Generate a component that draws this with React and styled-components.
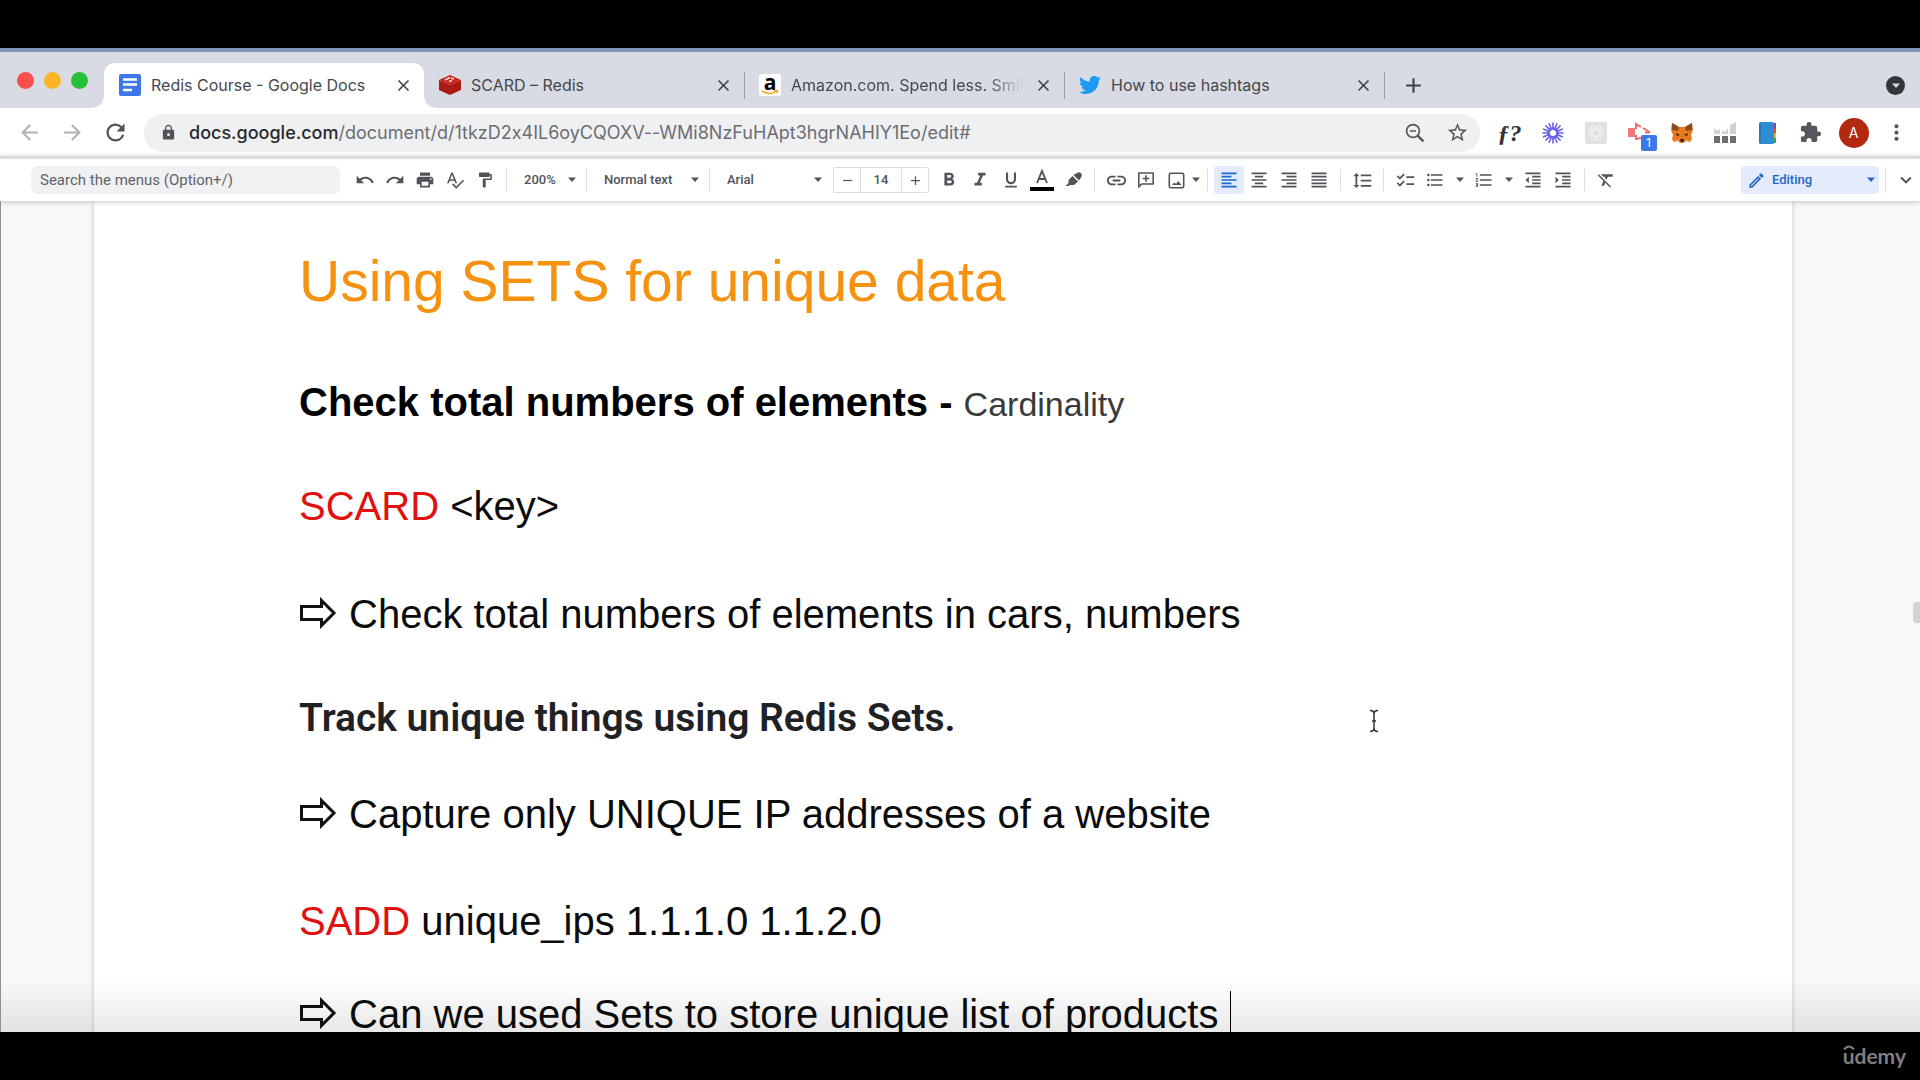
import React from "react";
import styled, { createGlobalStyle, css } from "styled-components";
import {
  MdUndo, MdRedo, MdPrint, MdSpellcheck, MdFormatPaint, MdFormatBold, MdFormatItalic,
  MdFormatUnderlined, MdLink, MdFormatAlignLeft, MdFormatAlignCenter,
  MdFormatAlignRight, MdFormatAlignJustify, MdFormatLineSpacing, MdChecklist,
  MdFormatListBulleted, MdFormatListNumbered, MdFormatIndentDecrease, MdFormatIndentIncrease,
  MdFormatClear, MdClose, MdAdd, MdRemove, MdLock, MdRefresh, MdStarBorder, MdExtension,
  MdMoreVert, MdArrowBack, MdArrowForward, MdExpandMore, MdOutlineEdit,
} from "react-icons/md";
import { FaTwitter } from "react-icons/fa";

const Global = createGlobalStyle`
  * { box-sizing: border-box; }
  body { margin: 0; background: #000; }
  button, input, select { font: inherit; color: inherit; border: 0; padding: 0; margin: 0; background: none; outline: 0; }
  button { cursor: pointer; }
  svg { display: block; flex: none; }
`;

const Screen = styled.div`
  height: 100vh;
  display: flex;
  flex-direction: column;
  padding-top: 48px;
  background: #000;
  font-family: Inter, "Liberation Sans", sans-serif;
`;

const Browser = styled.div`
  flex: 1;
  min-height: 0;
  display: flex;
  flex-direction: column;
  background: #fff;
  border-top: 4px solid #7f97b5;
`;

const TabStrip = styled.div`
  height: 56px;
  display: flex;
  align-items: flex-end;
  background: #d8dbe3;
`;

const Lights = styled.div`
  display: flex;
  gap: 10px;
  padding: 0 16px 19px 17px;
`;

const Light = styled.button`
  width: 17px;
  height: 17px;
  border-radius: 50%;
  background: ${(p) => p.$color};
`;

const Tab = styled.div`
  position: relative;
  width: 320px;
  height: 45px;
  padding: 0 11px 1px 15px;
  display: flex;
  align-items: center;
  gap: 10px;
  color: #45484d;
  font-size: 16px;
  line-height: 20px;
  ${(p) => p.$active && css`
    background: #fff;
    border-radius: 11px 11px 0 0;
    &::before, &::after {
      content: "";
      position: absolute;
      bottom: 0;
      width: 11px;
      height: 11px;
    }
    &::before { right: 100%; background: radial-gradient(circle at 0 0, transparent 10px, #fff 11px); }
    &::after { left: 100%; background: radial-gradient(circle at 100% 0, transparent 10px, #fff 11px); }
  `}
`;

const TabTitle = styled.span`
  flex: 1;
  min-width: 0;
  overflow: hidden;
  white-space: nowrap;
  ${(p) => p.$fade && css`
    mask-image: linear-gradient(to right, #000 84%, transparent 100%);
  `}
`;

const PlainButton = styled.button`
  display: flex;
  align-items: center;
  justify-content: center;
  color: ${(p) => p.$color || "#3c4043"};
`;

const TabLine = styled.span`
  width: 1px;
  height: 27px;
  margin: 0 -1px 9px 0;
  background: #9a9da5;
`;

const NewTab = styled(PlainButton)`
  width: 28px;
  height: 45px;
  padding-bottom: 1px;
  margin-left: 15px;
`;

const Spacer = styled.span`flex: 1;`;

const TabSearch = styled(PlainButton)`
  width: 19px;
  height: 19px;
  border-radius: 50%;
  background: #33373b;
  margin: 0 15px 13px 0;
`;

const AddressRow = styled.div`
  height: 48px;
  display: flex;
  align-items: center;
  padding: 1px 2px 0 8px;
  background: #fff;
`;

const NavButton = styled(PlainButton)`
  width: 43px;
  height: 40px;
`;

const UrlPill = styled.div`
  flex: 1;
  height: 38px;
  margin: 0 8px 0 7px;
  padding: 0 7px 0 16px;
  display: flex;
  align-items: center;
  gap: 12px;
  border-radius: 19px;
  background: #eff0f2;
  color: #505358;
`;

const Url = styled.a`
  flex: 1;
  font-size: 18px;
  line-height: 24px;
  color: #6b6e72;
  text-decoration: none;
  white-space: nowrap;
  font-feature-settings: "calt" 0;
  b { font-weight: 500; color: #26292d; }
`;

const PillButton = styled(PlainButton)`
  width: 31px;
  color: #54575b;
`;

const Extension = styled(PlainButton)`
  width: 43px;
  height: 40px;
`;

const FnText = styled.span`
  font: italic 700 24px/26px "Liberation Serif", serif;
  color: #303236;
`;

const Avatar = styled.span`
  width: 30px;
  height: 30px;
  border-radius: 50%;
  background: #b3290f;
  color: #fff;
  font: 400 14px/30px Inter, sans-serif;
  text-align: center;
`;

const BadgeWrap = styled.span`
  position: relative;
`;

const Badge = styled.span`
  position: absolute;
  left: 13px;
  top: 13px;
  width: 16px;
  height: 16px;
  border-radius: 2px;
  background: #3b78e7;
  color: #fff;
  font: 400 12px/16px Inter, sans-serif;
  text-align: center;
`;

const Toolbar = styled.div`
  position: relative;
  z-index: 1;
  height: 45px;
  display: flex;
  align-items: center;
  padding-left: 31px;
  border-top: 3px solid #dcdddf;
  background: #fff;
  box-shadow: 0 1px 5px rgba(60, 64, 67, 0.3);
  color: #50545a;
  font: 500 13px/20px Roboto, sans-serif;
`;

const MenuSearch = styled.input`
  width: 309px;
  height: 28px;
  padding: 0 9px;
  margin-right: 10px;
  border-radius: 7px;
  background: #f0f1f3;
  font: 400 15px/20px Roboto, sans-serif;
  &::placeholder { color: #5f6368; opacity: 1; }
`;

const Group = styled.div`
  display: flex;
  gap: ${(p) => p.$gap || 0}px;
`;

const Tool = styled.button`
  width: ${(p) => p.$width || 30}px;
  height: 28px;
  display: flex;
  align-items: center;
  justify-content: center;
  border-radius: 3px;
  ${(p) => p.$active && css`
    background: #e3ebfc;
    color: #1a67d2;
  `}
`;

const Line = styled.span`
  width: 1px;
  height: 22px;
  margin: 0 6px;
  background: #dadce0;
`;

const Pick = styled.label`
  position: relative;
  width: ${(p) => p.$width}px;
  height: 28px;
  display: flex;
  align-items: center;
  justify-content: flex-end;
  border-radius: 4px;
  ${(p) => p.$mode && css`
    background: #e3ebfc;
    color: #2565c4;
  `}
  select {
    position: absolute;
    inset: 0;
    width: 100%;
    padding-left: ${(p) => (p.$mode ? 31 : 11)}px;
    appearance: none;
  }
  > svg { margin-right: 3px; }
  > svg:first-child { margin: 0 auto 0 6px; }
`;

const Sizer = styled.div`
  width: 96px;
  height: 26px;
  margin: 0 5px 0 7px;
  display: flex;
  border: 1px solid #dadce0;
  border-radius: 2px;
  button { width: 26px; display: flex; align-items: center; justify-content: center; }
  input {
    flex: 1;
    min-width: 0;
    text-align: center;
    border: solid #dadce0;
    border-width: 0 1px;
  }
`;

const Workspace = styled.main`
  position: relative;
  flex: 1;
  min-height: 0;
  overflow: hidden;
  padding: 0 128px 0 93px;
  border-left: 1px solid #8e9093;
  background: #f7f8fa;
  &::after {
    content: "";
    position: absolute;
    inset: auto 0 0 0;
    height: 52px;
    background: linear-gradient(to bottom, rgba(0, 0, 0, 0), rgba(0, 0, 0, 0.09));
  }
`;

const Page = styled.article`
  min-height: 100%;
  padding: 48px 205px 0;
  background: #fff;
  box-shadow: 0 0 5px rgba(60, 64, 67, 0.25);
  color: #0b0b0b;
  font-family: "Liberation Sans", Arial, sans-serif;
  white-space: nowrap;
`;

const Title = styled.h1`
  margin: 0;
  font-size: 57px;
  line-height: 64px;
  font-weight: 400;
  color: #f6920f;
`;

const Para = styled.p`
  margin: ${(p) => p.$gap}px 0 0;
  font-size: 40px;
  line-height: 46px;
`;

const Heading = styled.h2`
  margin: ${(p) => p.$gap}px 0 0;
  font-size: 40px;
  line-height: 46px;
  font-weight: 700;
  color: #000;
  ${(p) => p.$roboto && css`
    font: 600 39px/46px Roboto, sans-serif;
    color: #202124;
  `}
`;

const Term = styled.span`
  font-weight: 400;
  font-size: 34px;
  line-height: 1;
  color: #3a3a3a;
`;

const Command = styled.span`color: #e0110f;`;

const ArrowSvg = styled.svg`
  display: inline-block;
  margin-right: 12px;
  vertical-align: -1px;
`;

const Arrow = () => (
  <ArrowSvg width="38" height="32" viewBox="0 0 38 32" role="img" aria-label="Arrow">
    <path d="M2.500 9.500H22.500V3.500L35 16 22.500 28.500V22.500H2.500z" fill="none" stroke="#111" strokeWidth="3" />
  </ArrowSvg>
);

const TextCaret = styled.span`
  display: inline-block;
  width: 1px;
  height: 46px;
  vertical-align: -9px;
  background: #000;
`;

const Thumb = styled.span`
  position: absolute;
  right: 0;
  top: 401px;
  width: 7px;
  height: 21px;
  border-radius: 4px 0 0 4px;
  background: #d2d3d7;
`;

const Pointer = styled.svg`
  position: absolute;
  left: 1366px;
  top: 508px;
`;

const Footer = styled.footer`
  height: 48px;
  display: flex;
  justify-content: flex-end;
  padding: 7px 14px 0 0;
`;

const Brand = styled.div`
  position: relative;
  color: #7f7f7f;
  font: 700 21px/34px Lato, sans-serif;
  svg { position: absolute; left: 0; top: 6px; }
`;

const Caret = () => (
  <svg width="10" height="6" viewBox="0 0 10 6"><path d="M1 0.5h8L5 5z" fill="currentColor" /></svg>
);

const DocsIcon = () => (
  <svg width="22" height="22" viewBox="0 0 22 22">
    <rect width="22" height="22" rx="2" fill="#3f76e8" />
    <path d="M4 5.5h14M4 10.5h14M4 16h9" stroke="#fff" strokeWidth="2.4" />
  </svg>
);

const RedisIcon = () => (
  <svg width="22" height="22" viewBox="0 0 22 22">
    <path d="M0 6v10l11 5 11-5V6l-11 5z" fill="#ab1a12" />
    <path d="M0 6l11-5 11 5-11 5z" fill="#c8251c" />
    <path d="M6 6l5-2.5M10 7.5l3-1M12 4l3 1" stroke="#fbdcd8" strokeWidth="1.6" />
  </svg>
);

const AmazonBox = styled.span`
  position: relative;
  width: 22px;
  height: 22px;
  border-radius: 3px;
  background: #fff;
  color: #000;
  font: 700 21px/16px "Open Sans", sans-serif;
  text-align: center;
  svg { position: absolute; left: 2px; bottom: 1px; }
`;

const AmazonIcon = () => (
  <AmazonBox>
    a
    <svg width="18" height="5" viewBox="0 0 18 5">
      <path d="M1 1q8 5 15 0M13 .7h3.4v2.6" fill="none" stroke="#f5a623" strokeWidth="1.5" />
    </svg>
  </AmazonBox>
);

const Burst = () => (
  <svg width="22" height="22" viewBox="-11 -11 22 22">
    {Array.from({ length: 16 }, (_, i) => (
      <path key={i} d="M0 -4V-10" stroke="#6a62e4" strokeWidth="1.6" strokeLinecap="round" transform={`rotate(${i * 22.5})`} />
    ))}
    <circle r="4.5" fill="none" stroke="#6a62e4" strokeWidth="2.4" />
  </svg>
);

const Atom = () => (
  <svg width="22" height="22" viewBox="0 0 22 22">
    <rect width="22" height="22" rx="2" fill="#e0e0e0" />
    <g fill="none" stroke="#f0f0f0" strokeWidth="1.2">
      <ellipse cx="11" cy="11" rx="8" ry="3.4" />
      <ellipse cx="11" cy="11" rx="8" ry="3.4" transform="rotate(60 11 11)" />
      <ellipse cx="11" cy="11" rx="8" ry="3.4" transform="rotate(120 11 11)" />
    </g>
  </svg>
);

const Player = () => (
  <svg width="22" height="22" viewBox="0 0 22 22">
    <path d="M0 6h7v9H0z" fill="#ef7777" />
    <path d="M8 7V2l5 3M15 6l7 4.500h-5M8 13v4l5-1" fill="none" stroke="#ee6b6b" strokeWidth="2" />
  </svg>
);

const Fox = () => (
  <svg width="22" height="22" viewBox="0 0 22 22">
    <path d="M1 1l7 4h6l7-4 1 7-2 5 1 4-2 3-4-1-2 2H9l-2-2-4 1-2-3 1-4-2-5z" fill="#e8791c" />
    <path d="M1 1l7 4-1 4-6-1zM21 1l-7 4 1 4 6-1z" fill="#8a4a1c" />
    <path d="M5 11l4 2-3 1zM17 11l-4 2 3 1z" fill="#3a2413" />
    <path d="M9 17h4l-1 3h-2z" fill="#2a2018" />
    <path d="M3 19l4-2 1 2zM19 19l-4-2-1 2z" fill="#d89a60" />
  </svg>
);

const Bars = () => (
  <svg width="22" height="22" viewBox="0 0 22 22">
    <path d="M0 6l3 3 3-2v5H0zM8 8l3 2 3-4v6H8zM16 3l6-3v12h-6z" fill="#d0d0d0" />
    <path d="M0 14h6v7H0zM8 14h6v7H8zM16 14h6v7h-6z" fill="#6d6d6d" />
  </svg>
);

const Book = () => (
  <svg width="18" height="22" viewBox="0 0 18 22">
    <rect width="15" height="22" rx="1.5" fill="#2f8bd2" />
    <path d="M1 2v18" stroke="#2577b8" strokeWidth="2" />
    <path d="M15 1h2v5h-2z" fill="#8d3fb0" /><path d="M15 6h2v5h-2z" fill="#e0463a" />
    <path d="M15 11h2v5h-2z" fill="#f0b429" /><path d="M15 16h2v5h-2z" fill="#3aa655" />
  </svg>
);

const ZoomOut = () => (
  <svg width="20" height="20" viewBox="0 0 20 20" fill="none" stroke="currentColor">
    <circle cx="8" cy="8" r="6.4" strokeWidth="1.7" />
    <path d="M12.6 12.6L18.4 18.4" strokeWidth="2.4" />
    <path d="M5 8h6" strokeWidth="1.5" />
  </svg>
);

const Highlighter = () => (
  <svg width="17" height="17" viewBox="0 0 17 17" fill="currentColor">
    <path d="M7.500 4l5.500 5.500-4 3.500H5l-1.500 1H.5L3.500 11V8z" />
    <path d="M8.500 3L12 1q2.500-1.500 4 .3t.3 3.700L14 8.500z" />
  </svg>
);

const CommentAdd = () => (
  <svg width="18" height="18" viewBox="0 0 18 18" fill="none" stroke="currentColor" strokeWidth="1.6">
    <path d="M1.800 16V2h14.400v11H4.600z" strokeLinejoin="round" /><path d="M9 4.300v6.400M5.800 7.500h6.400" />
  </svg>
);

const Picture = () => (
  <svg width="17" height="17" viewBox="0 0 17 17">
    <rect x="1.300" y="1.300" width="14.400" height="14.400" rx="1.500" fill="none" stroke="currentColor" strokeWidth="1.600" />
    <path d="M4 13l2.300-2.500 1.700 1.500 2.200-3L13.500 13z" fill="currentColor" />
  </svg>
);

const TextColor = () => (
  <svg width="24" height="24" viewBox="0 0 24 24">
    <path d="M7 15L12 3l5 12M8.600 11h6.800" fill="none" stroke="currentColor" strokeWidth="1.900" />
    <path d="M0 19h24v4H0z" fill="#000" />
  </svg>
);

const tabs = [
  { title: "Redis Course - Google Docs", icon: <DocsIcon />, active: true },
  { title: "SCARD – Redis", icon: <RedisIcon />, line: true },
  { title: "Amazon.com. Spend less. Smile more.", icon: <AmazonIcon />, line: true, fade: true },
  { title: "How to use hashtags", icon: <FaTwitter size={22} color="#1d9bf0" />, line: true },
];

const extensions = [
  ["Function lookup", <FnText key="f">ƒ?</FnText>],
  ["Loom", <Burst key="b" />],
  ["React tools", <Atom key="a" />],
  ["Recorder", <BadgeWrap key="r"><Player /><Badge>1</Badge></BadgeWrap>],
  ["MetaMask", <Fox key="m" />],
  ["Statistics", <Bars key="s" />],
  ["Notebook", <Book key="n" />],
  ["Extensions", <MdExtension key="e" size={23} color="#54575c" />],
  ["Profile", <Avatar key="p">A</Avatar>],
  ["Menu", <MdMoreVert key="v" size={25} color="#54575c" />],
];

const ToolButton = ({ label, children, ...rest }) => (
  <Tool type="button" aria-label={label} title={label} {...rest}>{children}</Tool>
);

const Picker = ({ label, value, width, mode, children }) => (
  <Pick $width={width} $mode={mode}>
    {children}
    <select aria-label={label} defaultValue={value}><option>{value}</option></select>
    <Caret />
  </Pick>
);

export default function App() {
  return (
    <Screen>
      <Global />
      <Browser>
        <TabStrip>
          <Lights>
            <Light $color="#fb4f4b" aria-label="Close window" />
            <Light $color="#fdb429" aria-label="Minimise window" />
            <Light $color="#24c138" aria-label="Zoom window" />
          </Lights>
          {tabs.map((t) => (
            <React.Fragment key={t.title}>
              <Tab $active={t.active}>
                {t.icon}
                <TabTitle $fade={t.fade}>{t.title}</TabTitle>
                <PlainButton aria-label={`Close ${t.title}`}><MdClose size={19} /></PlainButton>
              </Tab>
              {t.line && <TabLine />}
            </React.Fragment>
          ))}
          <NewTab aria-label="New tab"><MdAdd size={25} /></NewTab>
          <Spacer />
          <TabSearch aria-label="Search tabs" $color="#d8dbe3"><Caret /></TabSearch>
        </TabStrip>

        <AddressRow>
          <NavButton aria-label="Back" $color="#b0b2b5"><MdArrowBack size={25} /></NavButton>
          <NavButton aria-label="Forward" $color="#b0b2b5"><MdArrowForward size={25} /></NavButton>
          <NavButton aria-label="Reload" $color="#505358"><MdRefresh size={27} /></NavButton>
          <UrlPill>
            <MdLock size={17} />
            <Url href="#"><b>docs.google.com</b>/document/d/1tkzD2x4IL6oyCQOXV--WMi8NzFuHApt3hgrNAHIY1Eo/edit#</Url>
            <PillButton aria-label="Zoom"><ZoomOut /></PillButton>
            <PillButton aria-label="Bookmark"><MdStarBorder size={23} /></PillButton>
          </UrlPill>
          {extensions.map(([name, icon]) => (
            <Extension key={name} aria-label={name}>{icon}</Extension>
          ))}
        </AddressRow>

        <Toolbar>
          <MenuSearch aria-label="Search the menus" placeholder="Search the menus (Option+/)" />
          <Group>
            <ToolButton label="Undo"><MdUndo size={20} /></ToolButton>
            <ToolButton label="Redo"><MdRedo size={20} /></ToolButton>
            <ToolButton label="Print"><MdPrint size={20} /></ToolButton>
            <ToolButton label="Spelling"><MdSpellcheck size={20} /></ToolButton>
            <ToolButton label="Paint format"><MdFormatPaint size={18} /></ToolButton>
          </Group>
          <Line />
          <Picker label="Zoom" value="200%" width={67} />
          <Line />
          <Picker label="Styles" value="Normal text" width={110} />
          <Line />
          <Picker label="Font" value="Arial" width={110} />
          <Sizer>
            <button aria-label="Decrease font size"><MdRemove size={15} /></button>
            <input aria-label="Font size" defaultValue="14" />
            <button aria-label="Increase font size"><MdAdd size={15} /></button>
          </Sizer>
          <Group $gap={1}>
            <ToolButton label="Bold"><MdFormatBold size={22} /></ToolButton>
            <ToolButton label="Italic"><MdFormatItalic size={22} /></ToolButton>
            <ToolButton label="Underline"><MdFormatUnderlined size={20} /></ToolButton>
            <ToolButton label="Text color"><TextColor /></ToolButton>
            <ToolButton label="Highlight color"><Highlighter /></ToolButton>
          </Group>
          <Line />
          <ToolButton label="Insert link"><MdLink size={23} /></ToolButton>
          <ToolButton label="Add comment"><CommentAdd /></ToolButton>
          <ToolButton label="Insert image"><Picture /></ToolButton>
          <ToolButton label="Image options" $width={10}><Caret /></ToolButton>
          <Line />
          <ToolButton label="Left align" $active><MdFormatAlignLeft size={20} /></ToolButton>
          <ToolButton label="Center align"><MdFormatAlignCenter size={20} /></ToolButton>
          <ToolButton label="Right align"><MdFormatAlignRight size={20} /></ToolButton>
          <ToolButton label="Justify"><MdFormatAlignJustify size={20} /></ToolButton>
          <Line />
          <ToolButton label="Line spacing"><MdFormatLineSpacing size={21} /></ToolButton>
          <Line />
          <ToolButton label="Checklist"><MdChecklist size={21} /></ToolButton>
          <ToolButton label="Bulleted list"><MdFormatListBulleted size={20} /></ToolButton>
          <ToolButton label="Bullet options" $width={19}><Caret /></ToolButton>
          <ToolButton label="Numbered list"><MdFormatListNumbered size={20} /></ToolButton>
          <ToolButton label="Number options" $width={19}><Caret /></ToolButton>
          <ToolButton label="Decrease indent"><MdFormatIndentDecrease size={20} /></ToolButton>
          <ToolButton label="Increase indent"><MdFormatIndentIncrease size={20} /></ToolButton>
          <Line />
          <ToolButton label="Clear formatting"><MdFormatClear size={20} /></ToolButton>
          <Spacer />
          <Picker label="Mode" value="Editing" width={138} mode><MdOutlineEdit size={19} /></Picker>
          <Line />
          <ToolButton label="Hide menus" $width={28}><MdExpandMore size={22} /></ToolButton>
        </Toolbar>

        <Workspace>
          <Page>
            <Title>Using SETS for unique data</Title>
            <Heading $gap={66}>Check total numbers of elements - <Term>Cardinality</Term></Heading>
            <Para $gap={58}><Command>SCARD</Command> &lt;key&gt;</Para>
            <Para $gap={62}><Arrow />Check total numbers of elements in cars, numbers</Para>
            <Heading $gap={58} $roboto>Track unique things using Redis Sets.</Heading>
            <Para $gap={50}><Arrow />Capture only UNIQUE IP addresses of a website</Para>
            <Para $gap={61}><Command>SADD</Command> unique_ips 1.1.1.0 1.1.2.0</Para>
            <Para $gap={47}><Arrow />Can we used Sets to store unique list of products <TextCaret /></Para>
          </Page>
          <Thumb />
          <Pointer width="14" height="24" viewBox="0 0 14 24">
            <path d="M3 1.500q4 0 4 3.500v14q0 3.500-4 3.500M11 1.500q-4 0-4 3.500M7 19q0 3.500 4 3.500M5 12h4" fill="none" stroke="#333" strokeWidth="1.500" />
          </Pointer>
        </Workspace>
      </Browser>
      <Footer>
        <Brand>
          udemy
          <svg width="12" height="5" viewBox="0 0 12 5"><path d="M1 4.500Q6-1.500 11 4.500" fill="none" stroke="currentColor" strokeWidth="2" /></svg>
        </Brand>
      </Footer>
    </Screen>
  );
}
